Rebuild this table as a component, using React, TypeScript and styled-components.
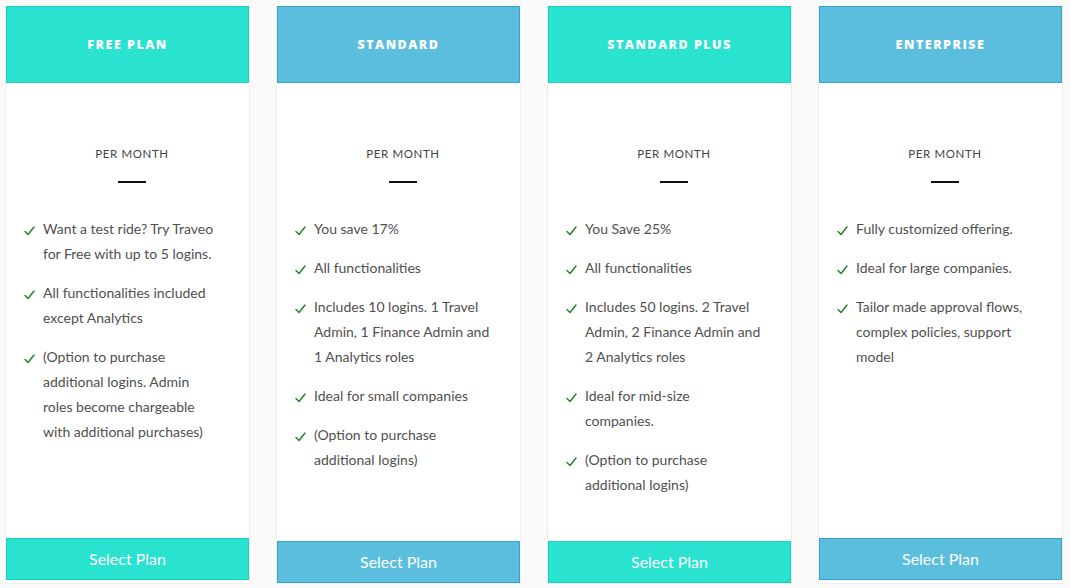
import styled, { createGlobalStyle } from "styled-components";

const GlobalStyle = createGlobalStyle`
  html, body {
    margin: 0;
    padding: 0;
    background: #fafafa;
  }
`;

type Tone = "teal" | "blue";

const colors: Record<Tone, { fill: string; edge: string }> = {
  teal: { fill: "#29e2d0", edge: "#1ccfbd" },
  blue: { fill: "#5cbedf", edge: "#36a3c8" },
};

const Page = styled.div`
  display: grid;
  grid-template-columns: repeat(4, 245px);
  column-gap: 26px;
  padding: 6px 0 0 5px;
  height: 578px;
`;

const Card = styled.div`
  display: flex;
  flex-direction: column;
  background: #fff;
  border: 1px solid #efefef;
  border-top: none;
`;

const Header = styled.div<{ $tone: Tone }>`
  height: 75px;
  display: flex;
  align-items: center;
  justify-content: center;
  background: ${(p) => colors[p.$tone].fill};
  border: 1px solid ${(p) => colors[p.$tone].edge};
  color: #fff;
  font-family: "Open Sans", sans-serif;
  font-weight: 800;
  font-size: 12.5px;
  letter-spacing: 1.5px;
`;

const Period = styled.div`
  margin-top: 63px;
  padding-left: 9px;
  text-align: center;
  font-family: Lato, sans-serif;
  font-size: 11.5px;
  letter-spacing: 0.6px;
  color: #444;
  line-height: 16px;
`;

const Rule = styled.div`
  width: 28px;
  height: 2px;
  background: #111;
  margin: 19px auto 0;
  position: relative;
  left: 4px;
`;

const Features = styled.ul`
  list-style: none;
  margin: 33px 0 0;
  padding: 0 30px 0 18px;
  display: flex;
  flex-direction: column;
  gap: 14px;
`;

const Feature = styled.li`
  display: flex;
  align-items: flex-start;
  gap: 8px;
  font-family: Lato, sans-serif;
  font-size: 14px;
  line-height: 25px;
  color: #505050;
`;

const Check = styled.svg`
  flex: none;
  width: 11px;
  height: 10px;
  margin-top: 10px;
`;

const SelectButton = styled.button<{ $tone: Tone; $sink: number }>`
  margin: auto 0 ${(p) => p.$sink}px;
  height: 42px;
  padding-bottom: 2px;
  background: ${(p) => colors[p.$tone].fill};
  border: 1px solid ${(p) => colors[p.$tone].edge};
  color: #fff;
  font-family: Lato, sans-serif;
  font-size: 16px;
  font-weight: 400;
  cursor: pointer;
`;

const plans: { name: string; tone: Tone; sink: number; items: string[] }[] = [
  {
    name: "FREE PLAN",
    tone: "teal",
    sink: 3,
    items: [
      "Want a test ride? Try Traveo for Free with up to 5 logins.",
      "All functionalities included except Analytics",
      "(Option to purchase additional logins. Admin roles become chargeable with additional purchases)",
    ],
  },
  {
    name: "STANDARD",
    tone: "blue",
    sink: 0,
    items: [
      "You save 17%",
      "All functionalities",
      "Includes 10 logins. 1 Travel Admin, 1 Finance Admin and 1 Analytics roles",
      "Ideal for small companies",
      "(Option to purchase additional logins)",
    ],
  },
  {
    name: "STANDARD PLUS",
    tone: "teal",
    sink: 0,
    items: [
      "You Save 25%",
      "All functionalities",
      "Includes 50 logins. 2 Travel Admin, 2 Finance Admin and 2 Analytics roles",
      "Ideal for mid-size companies.",
      "(Option to purchase additional logins)",
    ],
  },
  {
    name: "ENTERPRISE",
    tone: "blue",
    sink: 3,
    items: [
      "Fully customized offering.",
      "Ideal for large companies.",
      "Tailor made approval flows, complex policies, support model",
    ],
  },
];

function Tick() {
  return (
    <Check viewBox="0 0 11 10">
      <path d="M1 5.5 L4 8.5 L10 1" fill="none" stroke="#1a7f24" strokeWidth="1.4" strokeLinecap="round" strokeLinejoin="round" />
    </Check>
  );
}

export default function App() {
  return (
    <>
      <GlobalStyle />
      <Page>
        {plans.map((plan) => (
          <Card key={plan.name}>
            <Header $tone={plan.tone}>{plan.name}</Header>
            <Period>PER MONTH</Period>
            <Rule />
            <Features>
              {plan.items.map((item) => (
                <Feature key={item}>
                  <Tick />
                  <span>{item}</span>
                </Feature>
              ))}
            </Features>
            <SelectButton $tone={plan.tone} $sink={plan.sink}>Select Plan</SelectButton>
          </Card>
        ))}
      </Page>
    </>
  );
}
